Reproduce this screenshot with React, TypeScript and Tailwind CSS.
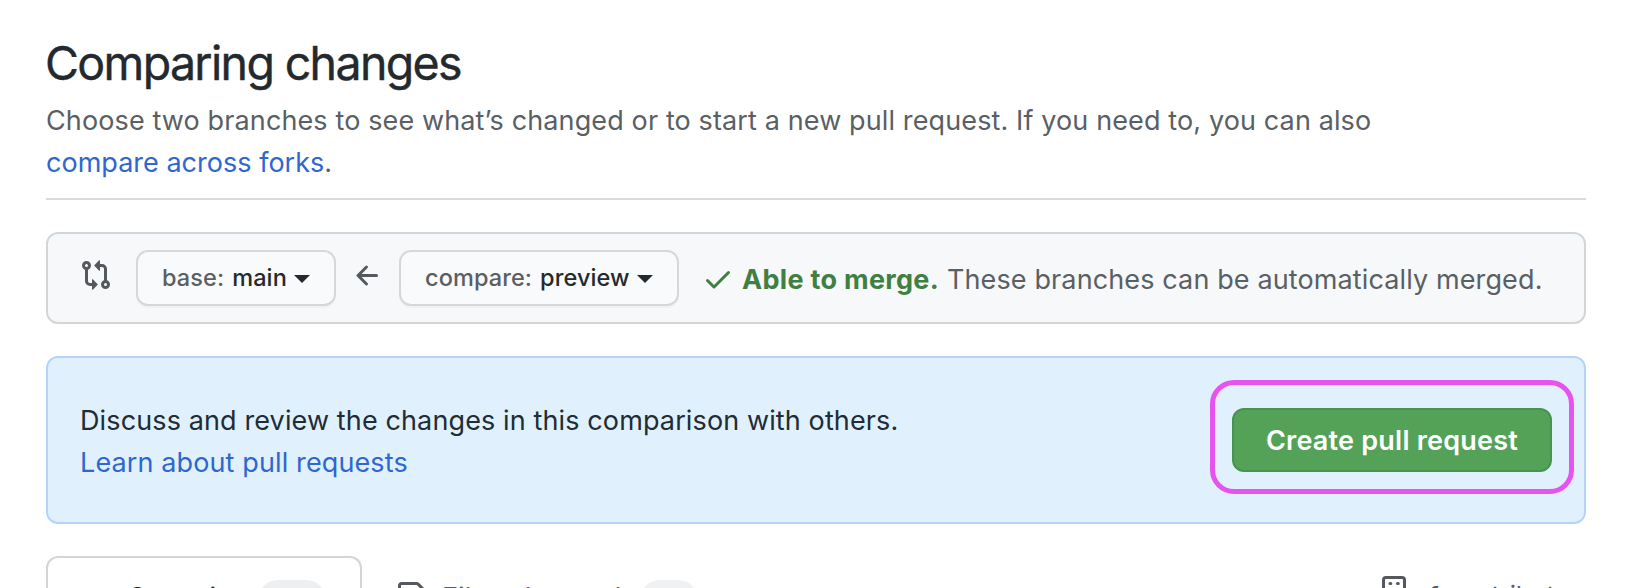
import React from "react";

const mutedText = "text-[#5a5f65]";

function CompareIcon() {
  return (
    <svg className="mt-[-6px] size-8 shrink-0" viewBox="0 0 16 16" fill="none" stroke="#55595e" strokeWidth="1.5">
      <circle cx="3.25" cy="3.25" r="1.5" />
      <circle cx="12.75" cy="12.75" r="1.5" />
      <path d="M3.25 4.9V11A1.75 1.75 0 0 0 5 12.75H6.6M12.75 11.1V5A1.75 1.75 0 0 0 11 3.25H9.4" />
      <path fill="#55595e" stroke="none" d="M9.573.677 7.177 3.073a.25.25 0 0 0 0 .354l2.396 2.396A.25.25 0 0 0 10 5.646V.854a.25.25 0 0 0-.427-.177ZM6 15.146v-4.792a.25.25 0 0 1 .427-.177l2.396 2.396a.25.25 0 0 1 0 .354l-2.396 2.396A.25.25 0 0 1 6 15.146Z" />
    </svg>
  );
}

function Picker({ label, value, className }: { label: string; value: string; className: string }) {
  return (
    <button className={`flex h-14 shrink-0 items-center rounded-xl border-2 border-[#d5d8da] bg-[#f9fafc] pl-6 text-[23.5px] leading-none font-medium tracking-[0.1px] whitespace-nowrap text-[#24292e] shadow-[0_2px_0_rgba(27,31,35,0.03)] ${className}`}>
      <span className="text-[#5a5f65]">{label}</span>
      <span className="ml-[8px]">{value}</span>
      <span className="mt-px ml-[7px] border-x-8 border-t-8 border-x-transparent border-t-[#24292e]" />
    </button>
  );
}

export default function App() {
  return (
    <div className="h-[588px] w-full overflow-hidden bg-white pr-[44px] pl-[46px] font-['Inter',sans-serif] text-[27px] leading-[42px] tracking-[0.12px] text-[#24292e]">
      <header className="h-[200px] border-b-2 border-[#d8dbdd] pt-[27px]">
        <h1 className="-ml-px text-[46.5px] leading-[73px] font-normal tracking-[-1.65px] [-webkit-text-stroke:0.4px_#24292e]">Comparing changes</h1>
        <p className={`${mutedText} whitespace-nowrap`}>
          Choose two branches to see what’s changed or to start a new pull request. If you need to, you can also
          <br />
          <a className="tracking-[0.02px] text-[#2f66d0]">compare across forks</a>.
        </p>
      </header>

      <section className="mt-8 flex h-[92px] items-center rounded-xl border-2 border-[#d3d6d8] bg-[#f6f8fa] pl-8">
        <CompareIcon />
        <Picker label="base:" value="main" className="ml-6 w-[200px]" />
        <svg className="mt-[-4px] ml-[16px] size-8 shrink-0" viewBox="0 0 16 16" fill="#55595e">
          <path d="M7.78 12.53a.75.75 0 0 1-1.06 0L2.47 8.28a.75.75 0 0 1 0-1.06l4.25-4.25a.751.751 0 0 1 1.042.018.751.751 0 0 1 .018 1.042L4.81 7h7.44a.75.75 0 0 1 0 1.5H4.81l2.97 2.97a.75.75 0 0 1 0 1.06Z" />
        </svg>
        <Picker label="compare:" value="preview" className="ml-[15px] w-[280px]" />
        <svg className="mt-[2px] ml-[23px] size-8 shrink-0" viewBox="0 0 16 16" fill="#3f8042">
          <path d="M13.78 4.22a.75.75 0 0 1 0 1.06l-7.25 7.25a.75.75 0 0 1-1.06 0L2.22 9.28a.751.751 0 0 1 .018-1.042.751.751 0 0 1 1.042-.018L6 10.94l6.72-6.72a.75.75 0 0 1 1.06 0Z" />
        </svg>
        <strong className="mt-[3px] ml-2 font-[650] tracking-[0.3px] whitespace-nowrap text-[#3f8042]">Able to merge.</strong>
        <span className={`${mutedText} mt-[3px] ml-2 whitespace-nowrap`}>These branches can be automatically merged.</span>
      </section>

      <section className="mt-8 flex h-[168px] justify-between rounded-xl border-2 border-[#b4d5f9] bg-[#e0f1fd] pl-8">
        <p className="pt-[42px] whitespace-nowrap text-[#202c36]">
          Discuss and review the changes in this comparison with others.
          <br />
          <a className="text-[#2f66d0]">Learn about pull requests</a>
        </p>
        <div className="mt-[22px] mr-[10px] flex h-[114px] w-[364px] justify-center rounded-[24px] border-5 border-[#e653f0] pt-[23px]">
          <button className="h-16 w-[320px] rounded-xl border-2 border-[#489350] bg-[#54a257] pt-px leading-none font-semibold tracking-[0.22px] whitespace-nowrap text-white">
            Create pull request
          </button>
        </div>
      </section>

      <nav className="mt-8 flex h-20">
        <div className="flex w-[316px] rounded-t-xl border-2 border-b-0 border-[#d3d6d8] pt-[18px] pl-8">
          <svg className="mt-[6px] size-8 shrink-0" viewBox="0 0 16 16" fill="#55595e">
            <path d="M11.93 8.5a4.002 4.002 0 0 1-7.86 0H.75a.75.75 0 0 1 0-1.5h3.32a4.002 4.002 0 0 1 7.86 0h3.32a.75.75 0 0 1 0 1.5Zm-1.43-.75a2.5 2.5 0 1 0-5 0 2.5 2.5 0 0 0 5 0Z" />
          </svg>
          <span className="ml-[15px] w-[131px] pt-px tracking-[-0.2px]">Commits</span>
          <span className="mt-[4px] h-10 w-[68px] rounded-full bg-[#eeeff1]" />
        </div>
        <div className="flex pt-5 pl-[34px] text-[#5a5f65]">
          <svg className="mt-[6px] size-8 shrink-0" viewBox="0 0 16 16" fill="#55595e">
            <path d="M1 1.75C1 .784 1.784 0 2.75 0h7.586c.464 0 .909.184 1.237.513l2.914 2.914c.329.328.513.773.513 1.237v9.586A1.75 1.75 0 0 1 13.25 16H2.75A1.75 1.75 0 0 1 1 14.25Zm1.75-.25a.25.25 0 0 0-.25.25v12.5c0 .138.112.25.25.25h10.5a.25.25 0 0 0 .25-.25V4.664a.25.25 0 0 0-.073-.177l-2.914-2.914a.25.25 0 0 0-.177-.073ZM8 3.25a.75.75 0 0 1 .75.75v1.5h1.5a.75.75 0 0 1 0 1.5h-1.5v1.5a.75.75 0 0 1-1.5 0V7h-1.5a.75.75 0 0 1 0-1.5h1.5V4A.75.75 0 0 1 8 3.25Zm-3 8a.75.75 0 0 1 .75-.75h4.5a.75.75 0 0 1 0 1.5h-4.5a.75.75 0 0 1-.75-.75Z" />
          </svg>
          <span className="ml-[14px] w-[198px] pt-px whitespace-nowrap">Files changed</span>
          <span className="mt-[4px] h-10 w-[58px] rounded-full bg-[#f0f1f2]" />
        </div>
        <div className="ml-auto flex w-[205px] pt-[18px] text-[26px] text-[#5a5f65]">
          <svg className="mt-[2px] h-8 w-[26px] shrink-0" viewBox="0 0 26 32" fill="none" stroke="#55595e" strokeWidth="3" strokeLinecap="round">
            <rect x="2.5" y="1.5" width="21" height="29" rx="2.5" />
            <path d="M9 7.5h.8M16.5 7.5h.8M9 14h.8M16.5 14h.8M9 20.5h.8M16.5 20.5h.8" />
          </svg>
          <span className="ml-[22px] pt-px tracking-[-0.3px] whitespace-nowrap"><b className="font-semibold">1</b> contributor</span>
        </div>
      </nav>
    </div>
  );
}
